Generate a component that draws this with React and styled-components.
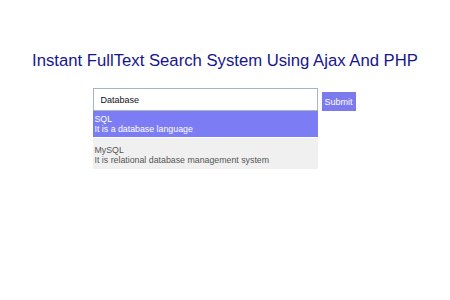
import React, { useState } from "react";
import styled, { createGlobalStyle } from "styled-components";

const suggestions = [
	{ title: "SQL", desc: "It is a database language" },
	{ title: "MySQL", desc: "It is relational database management system" },
];

function App() {
	const [Query, setQuery] = useState("Database");
	const [Active] = useState(0);

	const onQueryHandler = (event) => {
		setQuery(event.currentTarget.value);
	};

	return (
		<Page>
			<GlobalStyle />
			<Title>Instant FullText Search System Using Ajax And PHP</Title>
			<SearchRow>
				<Field>
					<SearchInput type="text" value={Query} onChange={onQueryHandler} />
					<SuggestList>
						{suggestions.map((item, idx) => (
							<SuggestItem key={idx} $active={idx === Active}>
								<div>{item.title}</div>
								<div>{item.desc}</div>
							</SuggestItem>
						))}
					</SuggestList>
				</Field>
				<SubmitButton type="button">Submit</SubmitButton>
			</SearchRow>
		</Page>
	);
}

const GlobalStyle = createGlobalStyle`
	body {
		margin: 0;
		background: #fff;
		font-family: "Liberation Sans", Arial, sans-serif;
	}
`;

const Page = styled.div`
	display: flex;
	flex-direction: column;
	align-items: center;
	width: 450px;
	height: 300px;
	padding-top: 51px;
	box-sizing: border-box;
`;

const Title = styled.h1`
	margin: 0 0 18px;
	font-size: 16.7px;
	font-weight: normal;
	line-height: 19px;
	color: #16168c;
`;

const SearchRow = styled.div`
	display: flex;
	align-items: flex-start;
	gap: 4px;
	margin-left: -2px;
`;

const Field = styled.div`
	display: flex;
	flex-direction: column;
	width: 225px;
`;

const SearchInput = styled.input`
	box-sizing: border-box;
	width: 100%;
	height: 23px;
	padding: 0 7px;
	font-family: "Liberation Sans", Arial, sans-serif;
	font-size: 9px;
	color: #111;
	border: 1px solid #a9b3c6;
	border-radius: 0;
	outline: none;
`;

const SuggestList = styled.div`
	display: flex;
	flex-direction: column;
	gap: 1px;
`;

const SuggestItem = styled.div`
	padding: ${(p) => (p.$active ? "3px 2px 3px" : "7px 2px 4px")};
	font-size: 8.8px;
	line-height: 10px;
	background: ${(p) => (p.$active ? "#7c7cf4" : "#f0f0f0")};
	color: ${(p) => (p.$active ? "#fff" : "#555")};
`;

const SubmitButton = styled.button`
	margin-top: 4px;
	width: 34px;
	height: 19px;
	padding: 0;
	font-family: "Liberation Sans", Arial, sans-serif;
	font-size: 9px;
	color: #fff;
	background: #7b7bef;
	border: none;
	border-radius: 0;
`;

export default App;
